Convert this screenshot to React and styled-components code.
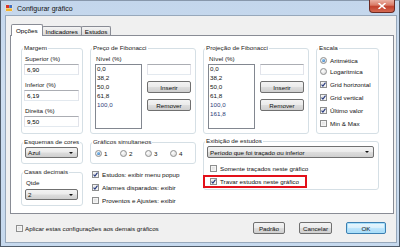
import React from "react";
import styled, { createGlobalStyle, css } from "styled-components";

const GlobalStyle = createGlobalStyle`
  html, body { margin: 0; padding: 0; background: #ffffff; }
  body {
    font-family: "Liberation Sans", Arial, sans-serif;
    font-size: 6.25px;
    color: #000;
  }
  *, *::before, *::after { box-sizing: border-box; }
`;

const Window = styled.div`
  width: 400px;
  height: 247px;
  display: flex;
  flex-direction: column;
  padding: 0 2px 3px 4px;
  border: 1px solid #4f5b69;
  border-top-color: #8797ab;
  background: linear-gradient(180deg, #c3d6ec 0%, #cfdff1 35%, #c6d9ee 100%);
`;

const TitleBar = styled.div`
  height: 14px;
  flex: none;
  display: flex;
  align-items: center;
  gap: 4px;
`;

const Title = styled.span`
  flex: 1;
  font-size: 7px;
  color: #111;
`;

const CloseButton = styled.div`
  align-self: flex-start;
  margin-top: -1px;
  margin-right: 2px;
  width: 26px;
  height: 13px;
  border: 1px solid #6b2a22;
  border-top: none;
  border-radius: 0 0 4px 4px;
  background: linear-gradient(180deg, #eab1a3 0%, #da7c68 42%, #c2412d 55%, #d56a52 100%);
  display: flex;
  align-items: center;
  justify-content: center;
`;

const Client = styled.div`
  flex: 1;
  display: flex;
  flex-direction: column;
  padding: 8px 2px 0 4px;
  background: #f0f0f0;
  border: 1px solid #97a8bb;
`;

const TabStrip = styled.div`
  position: relative;
  z-index: 1;
  height: 11px;
  flex: none;
  display: flex;
  align-items: flex-end;
  padding-left: 1px;
`;

const Tab = styled.div`
  height: 9px;
  padding: 0 3px;
  display: flex;
  align-items: center;
  border: 1px solid #898c95;
  border-bottom: none;
  border-radius: 2px 2px 0 0;
  background: linear-gradient(180deg, #f4f4f4 0%, #e8e8e8 50%, #dcdcdc 100%);
  & + & { margin-left: -1px; }
  ${(p) =>
    p.$active &&
    css`
      height: 12px;
      margin-bottom: -1px;
      padding: 0 4px;
      background: #ffffff;
      position: relative;
      z-index: 2;
    `}
`;

const Panel = styled.div`
  flex: none;
  height: 179px;
  background: #ffffff;
  border: 1px solid #898c95;
  padding: 8px 0 0 10px;
  display: grid;
  grid-template-columns: 62px 106px 106px 63px;
  grid-template-rows: 90px 26px 38px;
  column-gap: 7px;
  row-gap: 4px;
  align-content: start;
`;

const Group = styled.fieldset`
  margin: 0;
  padding: 0;
  min-width: 0;
  border: 1px solid #d5dfe5;
  border-radius: 3px;
  display: flex;
  flex-direction: column;
  ${(p) =>
    p.$wide &&
    css`
      grid-column: 3 / span 2;
      grid-row: 2 / span 2;
      align-self: start;
      height: 53px;
      margin-top: -1px;
    `}
`;

const Legend = styled.legend`
  margin-left: 1px;
  padding: 0 1px;
  line-height: 8px;
  color: #1c1c1c;
`;

const FieldLabel = styled.div`
  line-height: 8px;
  height: 8px;
  padding-left: 1px;
  color: #1a1a1a;
`;

const TextBox = styled.div`
  height: 11px;
  margin-top: 1px;
  padding-left: 2px;
  display: flex;
  align-items: center;
  background: #ffffff;
  border: 1px solid #e2e3ea;
  border-top-color: #abadb3;
  border-bottom-color: #e3e9ef;
`;

const MarginBody = styled.div`
  display: flex;
  flex-direction: column;
  gap: 6px;
  padding: 3px 3px 0 2px;
`;

const FibBody = styled.div`
  display: flex;
  flex-direction: column;
  padding: 3px 4px 0 4px;
`;

const FibRow = styled.div`
  display: flex;
  gap: 5px;
  margin-top: 1px;
`;

const ListBox = styled.div`
  width: 47px;
  height: 65px;
  flex: none;
  padding: 0 1px;
  background: #ffffff;
  border: 1px solid #828790;
`;

const ListItem = styled.div`
  height: 9px;
  line-height: 7px;
  color: ${(p) => (p.$ext ? "#2c3c78" : "#111")};
`;

const SideColumn = styled.div`
  flex: 1;
  display: flex;
  flex-direction: column;
  gap: 6px;
  & > ${TextBox} { margin-top: 0; }
`;

const PushButton = styled.div`
  height: 12px;
  width: ${(p) => p.$w || "auto"};
  flex: none;
  display: flex;
  align-items: center;
  justify-content: center;
  border: 1px solid #707070;
  border-radius: 2px;
  color: #111;
  background: linear-gradient(180deg, #f3f3f3 0%, #ebebeb 48%, #dddddd 52%, #cfcfcf 100%);
  ${(p) =>
    p.$default &&
    css`
      border-color: #3c7fb1;
      background: linear-gradient(180deg, #eaf6fd 0%, #d9f0fc 48%, #bee6fd 52%, #a7d9f5 100%);
      box-shadow: inset 0 0 0 1px #a8e0fb;
    `}
`;

const ScaleBody = styled.div`
  display: flex;
  flex-direction: column;
  padding: 3px 2px 0 3px;
`;

const OptionRow = styled.div`
  display: flex;
  align-items: center;
  gap: 3px;
  height: ${(p) => p.$h || 13}px;
  flex: none;
  color: #111;
  white-space: nowrap;
`;

const CheckSpacer = styled.div`
  height: 1.5px;
`;

const Box = styled.span`
  width: 7px;
  height: 7px;
  flex: none;
  display: flex;
  align-items: center;
  justify-content: center;
  border: 1px solid #8e8f8f;
  background: linear-gradient(135deg, #dadada 0%, #f6f6f6 100%);
  box-shadow: inset 0 0 0 1px #f4f4f4;
`;

const RadioCircle = styled.span`
  width: 7px;
  height: 7px;
  flex: none;
  border-radius: 50%;
  display: flex;
  align-items: center;
  justify-content: center;
  border: 1px solid #8e8f8f;
  background: radial-gradient(circle at 35% 35%, #ffffff 0%, #d4d4d4 100%);
`;

const RadioDot = styled.span`
  width: 3px;
  height: 3px;
  border-radius: 50%;
  background: radial-gradient(circle at 35% 35%, #8fd0f8 0%, #1d5cb0 100%);
`;

const ComboBox = styled.div`
  height: ${(p) => p.$h || 11}px;
  flex: none;
  display: flex;
  align-items: center;
  justify-content: space-between;
  padding: 0 4px 0 2px;
  border: 1px solid #707070;
  border-radius: 2px;
  color: #111;
  background: linear-gradient(180deg, #f3f3f3 0%, #ebebeb 48%, #dddddd 52%, #cfcfcf 100%);
`;

const ComboArrow = styled.span`
  width: 0;
  height: 0;
  border-left: 2px solid transparent;
  border-right: 2px solid transparent;
  border-top: 2px solid #111;
`;

const SchemeBody = styled.div`
  display: flex;
  flex-direction: column;
  padding: 1px 4px 0 3px;
`;

const DecimalBody = styled.div`
  display: flex;
  flex-direction: column;
  padding: 3px 4px 0 3px;
  & > ${ComboBox} { margin-top: 2px; }
`;

const SimulBody = styled.div`
  flex: 1;
  display: flex;
  align-items: center;
  padding: 0 0 3px 4px;
`;

const SimulChoice = styled.div`
  width: 26px;
  display: flex;
  align-items: center;
  gap: 2px;
  color: #111;
`;

const CheckColumn = styled.div`
  display: flex;
  flex-direction: column;
  padding-left: 2px;
`;

const StudyBody = styled.div`
  display: flex;
  flex-direction: column;
  padding: 0 4px 0 3px;
  & > ${ComboBox} { margin-top: 1px; }
`;

const StudyRow = styled(OptionRow)`
  padding-left: 3px;
  margin-top: ${(p) => p.$mt || 0}px;
`;

const Highlight = styled(OptionRow)`
  align-self: flex-start;
  margin-left: -4px;
  padding: 0 6px 0 5px;
  border: 2px solid #e3101a;
`;

const Footer = styled.div`
  flex: 1;
  display: flex;
  align-items: center;
  padding: 0 8px 0 6px;
`;

const FooterCheck = styled(OptionRow)`
  gap: 2px;
`;

const ButtonBar = styled.div`
  margin-left: auto;
  display: flex;
  gap: 14px;
`;

const CheckMark = () => (
  <svg width="5" height="5" viewBox="0 0 5 5">
    <path d="M0.5 2.6 L1.9 4.1 L4.5 0.6" stroke="#26397d" strokeWidth="1.1" fill="none" />
  </svg>
);

const Check = ({ checked }) => <Box>{checked && <CheckMark />}</Box>;

const Radio = ({ checked }) => <RadioCircle>{checked && <RadioDot />}</RadioCircle>;

const AppIcon = () => (
  <svg width="8" height="8" viewBox="0 0 8 8">
    <rect x="0" y="0" width="8" height="8" fill="#f6f6f6" stroke="#9aa4b0" strokeWidth="0.6" />
    <rect x="1" y="1" width="3" height="3" fill="#d8322a" />
    <rect x="4.2" y="1" width="2.8" height="3" fill="#3a6fc6" />
    <rect x="1" y="4.4" width="6" height="2.6" fill="#f2b32a" />
  </svg>
);

const CloseGlyph = () => (
  <svg width="8" height="6" viewBox="0 0 8 6">
    <path d="M1 0.5 L7 5.5 M7 0.5 L1 5.5" stroke="#ffffff" strokeWidth="1.6" strokeLinecap="round" />
  </svg>
);

const fibLevels = ["0,0", "38,2", "50,0", "61,8", "100,0"];
const projLevels = ["0,0", "38,2", "50,0", "61,8", "100,0", "161,8"];

const FibGroup = ({ title, levels }) => (
  <Group>
    <Legend>{title}</Legend>
    <FibBody>
      <FieldLabel>Nível (%)</FieldLabel>
      <FibRow>
        <ListBox>
          {levels.map((l) => (
            <ListItem key={l} $ext={parseFloat(l) >= 100}>
              {l}
            </ListItem>
          ))}
        </ListBox>
        <SideColumn>
          <TextBox />
          <PushButton>Inserir</PushButton>
          <PushButton>Remover</PushButton>
        </SideColumn>
      </FibRow>
    </FibBody>
  </Group>
);

export default function App() {
  return (
    <>
      <GlobalStyle />
      <Window>
        <TitleBar>
          <AppIcon />
          <Title>Configurar gráfico</Title>
          <CloseButton>
            <CloseGlyph />
          </CloseButton>
        </TitleBar>
        <Client>
          <TabStrip>
            <Tab $active>Opções</Tab>
            <Tab>Indicadores</Tab>
            <Tab>Estudos</Tab>
          </TabStrip>
          <Panel>
            <Group>
              <Legend>Margem</Legend>
              <MarginBody>
                <div>
                  <FieldLabel>Superior (%)</FieldLabel>
                  <TextBox>6,90</TextBox>
                </div>
                <div>
                  <FieldLabel>Inferior (%)</FieldLabel>
                  <TextBox>6,19</TextBox>
                </div>
                <div>
                  <FieldLabel>Direita (%)</FieldLabel>
                  <TextBox>9,50</TextBox>
                </div>
              </MarginBody>
            </Group>

            <FibGroup title="Preço de Fibonacci" levels={fibLevels} />
            <FibGroup title="Projeção de Fibonacci" levels={projLevels} />

            <Group>
              <Legend>Escala</Legend>
              <ScaleBody>
                <OptionRow $h={11}>
                  <Radio checked />
                  Aritmética
                </OptionRow>
                <OptionRow $h={11}>
                  <Radio />
                  Logarítmica
                </OptionRow>
                <CheckSpacer />
                <OptionRow $h={12.8}>
                  <Check checked />
                  Grid horizontal
                </OptionRow>
                <OptionRow $h={12.8}>
                  <Check checked />
                  Grid vertical
                </OptionRow>
                <OptionRow $h={12.8}>
                  <Check checked />
                  Último valor
                </OptionRow>
                <OptionRow $h={12.8}>
                  <Check />
                  Min &amp; Max
                </OptionRow>
              </ScaleBody>
            </Group>

            <Group>
              <Legend>Esquemas de cores</Legend>
              <SchemeBody>
                <ComboBox>
                  Azul
                  <ComboArrow />
                </ComboBox>
              </SchemeBody>
            </Group>

            <Group>
              <Legend>Gráficos simultaneos</Legend>
              <SimulBody>
                {["1", "2", "3", "4"].map((n) => (
                  <SimulChoice key={n}>
                    <Radio checked={n === "1"} />
                    {n}
                  </SimulChoice>
                ))}
              </SimulBody>
            </Group>

            <Group $wide>
              <Legend>Exibição de estudos</Legend>
              <StudyBody>
                <ComboBox $h={12}>
                  Período que foi traçado ou inferior
                  <ComboArrow />
                </ComboBox>
                <StudyRow $mt={4}>
                  <Check />
                  Somente traçados neste gráfico
                </StudyRow>
                <Highlight>
                  <Check checked />
                  Travar estudos neste gráfico
                </Highlight>
              </StudyBody>
            </Group>

            <Group>
              <Legend>Casas decimais</Legend>
              <DecimalBody>
                <FieldLabel>Qtde</FieldLabel>
                <ComboBox>
                  2
                  <ComboArrow />
                </ComboBox>
              </DecimalBody>
            </Group>

            <CheckColumn>
              <OptionRow>
                <Check checked />
                Estudos: exibir menu popup
              </OptionRow>
              <OptionRow>
                <Check checked />
                Alarmes disparados: exibir
              </OptionRow>
              <OptionRow>
                <Check />
                Proventos e Ajustes: exibir
              </OptionRow>
            </CheckColumn>
          </Panel>
          <Footer>
            <FooterCheck>
              <Check />
              Aplicar estas configurações aos demais gráficos
            </FooterCheck>
            <ButtonBar>
              <PushButton $w="32px">Padrão</PushButton>
              <PushButton $w="33px">Cancelar</PushButton>
              <PushButton $w="40px" $default>
                OK
              </PushButton>
            </ButtonBar>
          </Footer>
        </Client>
      </Window>
    </>
  );
}
